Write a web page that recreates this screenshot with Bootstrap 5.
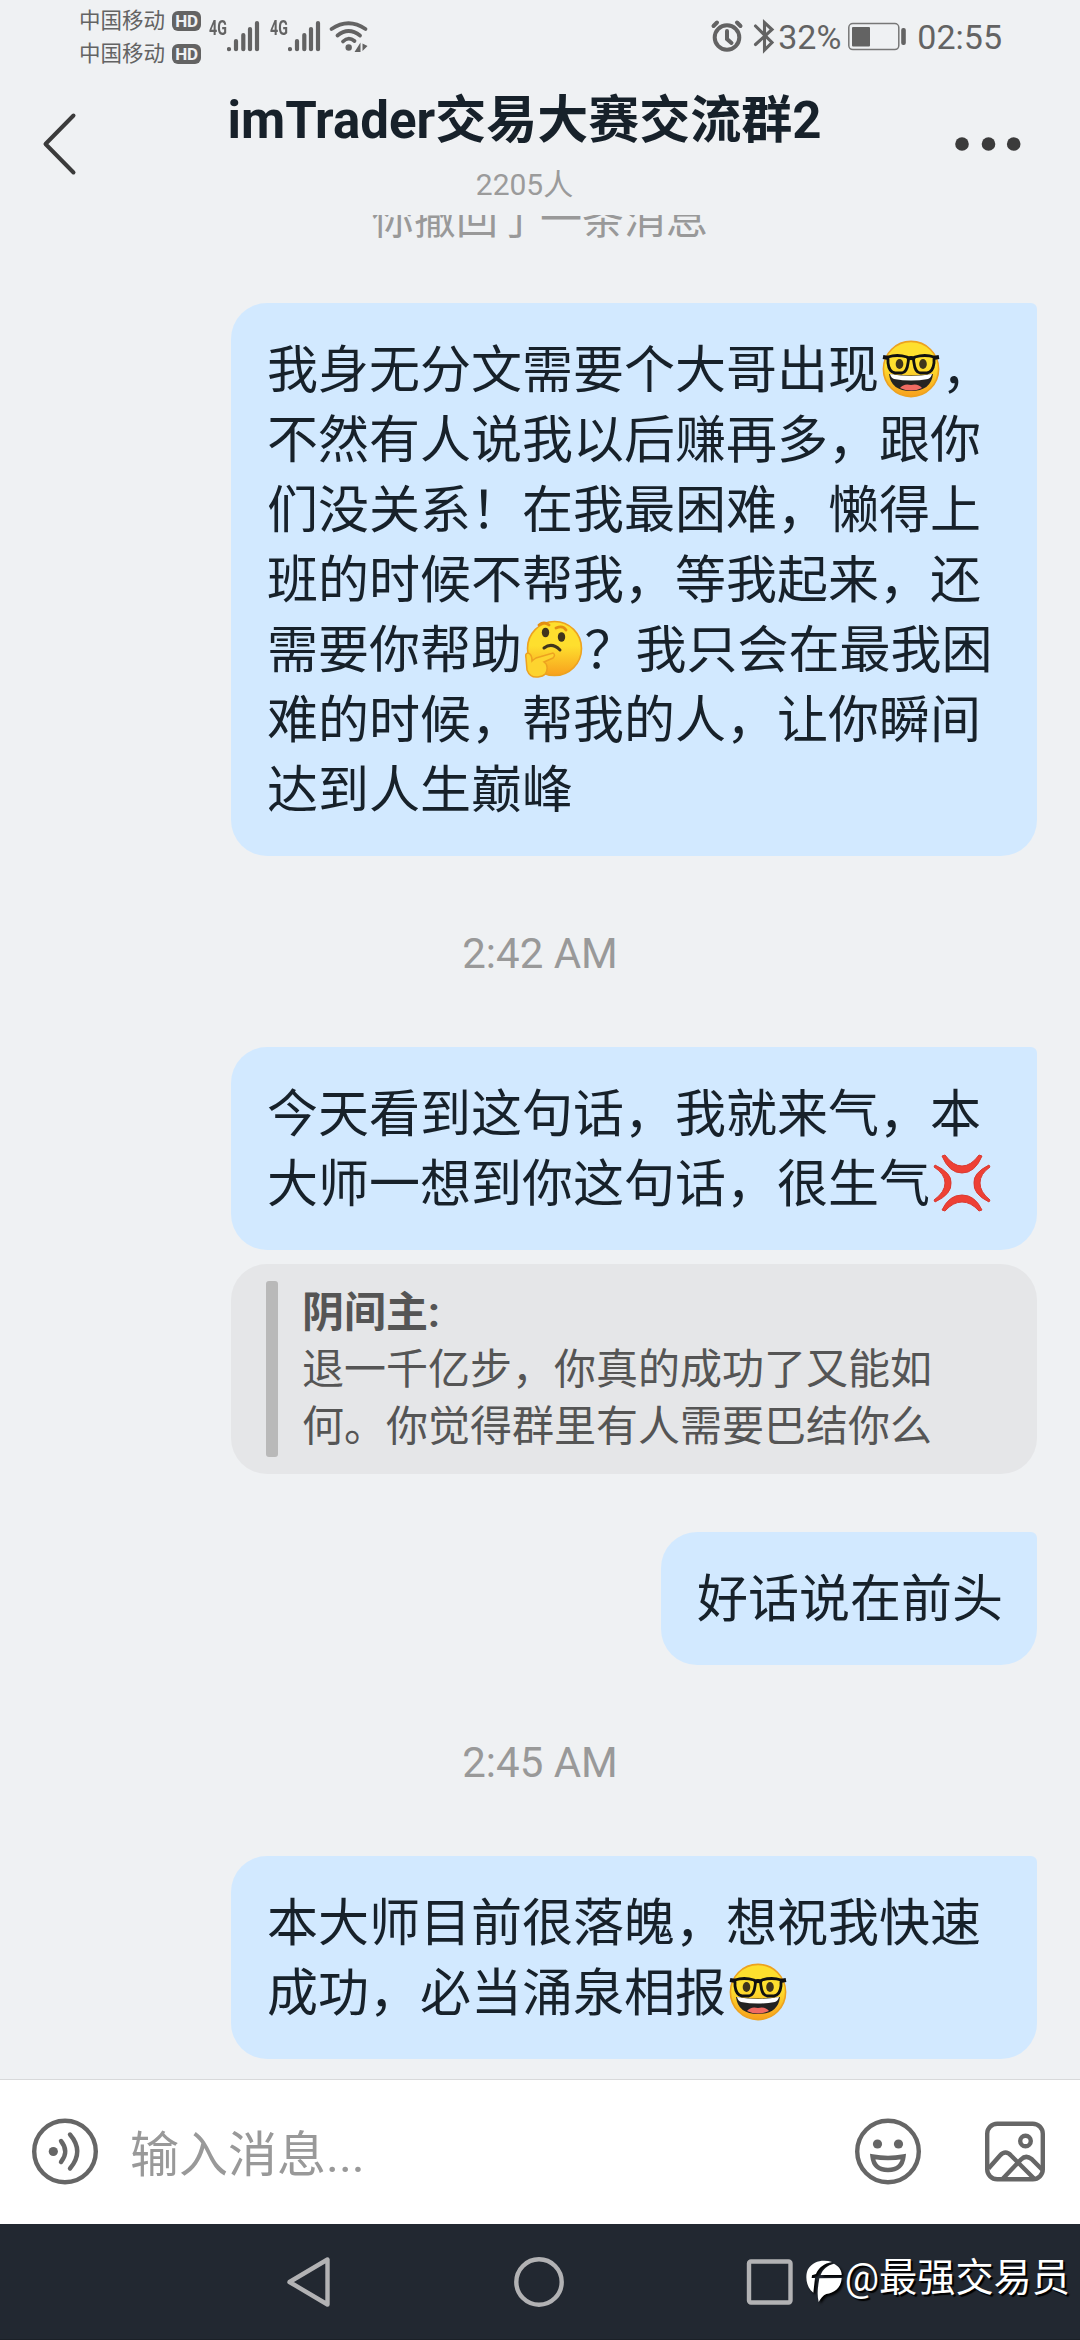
<!DOCTYPE html>
<html lang="zh-CN">
<head>
<meta charset="utf-8">
<meta name="viewport" content="width=device-width, initial-scale=1">
<title>imTrader交易大赛交流群2</title>
<link href="https://cdn.jsdelivr.net/npm/bootstrap@5.3.0/dist/css/bootstrap.min.css" rel="stylesheet">
<style>
  body { background: #eff1f3; font-family: Roboto, "Noto Sans CJK SC", sans-serif; color: #17212a; }
  svg { display: block; flex: none; }
  .screen { width: 1080px; height: 2340px; overflow: hidden; }

  .statusbar { height: 75px; padding: 4px 78px 0 79px; color: #636363; }
  .carriers { font-size: 21.5px; line-height: 33px; width: 130px; }
  .hd-tag { width: 29px; height: 20px; border-radius: 6px; background: #636363; color: #eff1f3; font-size: 17px; line-height: 20px; font-weight: 700; letter-spacing: -.3px; text-align: center; }
  .net-gen { font-size: 21px; line-height: 20px; font-weight: 700; width: 24px; margin-top: 14px; transform: scaleX(.68); transform-origin: left; }
  .net-gen-2 { margin-left: 6px; }
  .bars { margin-left: -6px; }
  .wifi { margin-left: 3px; }
  .status-num { font-size: 34px; line-height: 40px; margin-top: 13px; }

  .topbar { height: 140px; padding: 0 58px 0 42px; }
  .chat-title { font-size: 51px; line-height: 60px; font-weight: 700; white-space: nowrap; margin-top: 16px; }
  .chat-count { font-size: 30px; line-height: 36px; color: #9b9b9b; margin-top: 16px; }

  .recall { font-size: 42px; line-height: 57px; margin-top: -24px; margin-bottom: 55px; color: #999; }
  .stamp { height: 191px; padding-top: 3px; font-size: 42px; color: #999; }
  .thread { padding-right: 43px; }
  .bubble { background: #d2e9ff; border-radius: 36px 6px 36px 36px; padding: 33px 34px 30px 36px; font-size: 51px; line-height: 70px; white-space: nowrap; }
  .bubble-wide { width: 806px; }
  .emo { display: inline-block; width: 58px; height: 58px; margin: 0 2px 0 2.5px; vertical-align: -10px; }
  .quoted { width: 806px; height: 210px; margin: 14px 0 58px; padding: 17px 35px; border-radius: 36px; background: #e5e6e8; color: #555; font-size: 42px; line-height: 57px; gap: 24px; white-space: nowrap; }
  .quote-rule { width: 12px; border-radius: 3px; background: #b9b9b9; }
  .quote-text { padding-top: 3px; }
  .quote-name { font-weight: 700; }

  .composer { height: 145px; border-top: 1px solid #d8d9da; padding: 0 33px 0 30px; }
  .composer-hint { font-size: 49px; line-height: 70px; color: #999; margin-left: 30px; padding-top: 7px; }

  .sysnav { height: 116px; background: #222831; border-bottom: 1px solid #1b2027; padding: 0 286px; }
  .watermark { right: 10px; bottom: 32px; height: 60px; gap: 2px; font-size: 38.2px; line-height: 60px; color: #fff; text-shadow: 2px 2px 1px #000; white-space: nowrap; }
  .brand { filter: drop-shadow(2px 2px 1px #000); }
</style>
</head>
<body>
<svg width="0" height="0" class="position-absolute" aria-hidden="true">
  <defs>
    <linearGradient id="face" x1="0" y1="0" x2="0" y2="1"><stop offset=".45" stop-color="#fedf2e"/><stop offset="1" stop-color="#f8a01d"/></linearGradient>
    <symbol id="nerd" viewBox="0 0 58 58">
      <circle cx="29" cy="29" r="27.6" fill="url(#face)" stroke="#eda220" stroke-width="1.6"/>
      <path d="M7 34Q29 37 51 34Q49 51 29 51Q9 51 7 34Z" fill="#242322"/>
      <path d="M8 34Q29 38 50 34Q49 38 46 39Q29 42 12 39Q9 38 8 34Z" fill="#fff"/>
      <path d="M18 48Q22 43 29 45Q36 43 40 48Q29 53 18 48Z" fill="#f06b62"/>
      <ellipse cx="17.500" cy="24" rx="3.800" ry="5" fill="#40351c"/><ellipse cx="41" cy="24" rx="3.800" ry="5" fill="#40351c"/>
      <path d="M6 17Q15 14 25 17Q27 18 26 23Q25 32 20 33H13Q7 32 6 23ZM33 17Q43 14 52 17L52 23Q51 32 45 33H38Q33 32 32 23Q31 18 33 17Z" fill="none" stroke="#111" stroke-width="2.800"/>
      <path d="M1 17L7 18M51 18L57 17M25 19Q29 17 33 19" fill="none" stroke="#111" stroke-width="4.200"/>
    </symbol>
    <symbol id="bars" viewBox="234 4 37 60"><path d="M236 49v.2M243 41v8.200M250.300 35v14.200M257 29v20.200M264 23v26.200"/></symbol>
  </defs>
</svg>

<div class="screen d-flex flex-column position-relative">

  <div class="statusbar d-flex justify-content-between flex-shrink-0">
    <div class="d-flex">
      <div class="carriers">
        <div class="d-flex align-items-center justify-content-between pe-2"><span>中国移动</span><span class="hd-tag">HD</span></div>
        <div class="d-flex align-items-center justify-content-between pe-2"><span>中国移动</span><span class="hd-tag">HD</span></div>
      </div>
      <div class="net-gen">4G</div>
      <svg class="bars" width="37" height="60" stroke="#636363" stroke-width="4.200" stroke-linecap="round"><use href="#bars"/></svg>
      <div class="net-gen net-gen-2">4G</div>
      <svg class="bars" width="37" height="60" stroke="#636363" stroke-width="4.200" stroke-linecap="round"><use href="#bars"/></svg>
      <svg class="wifi" width="42" height="60" viewBox="328 4 42 60" fill="none" stroke="#636363" stroke-width="3.800" stroke-linecap="round">
        <path d="M331.500 29Q348.500 17.500 365.500 29M337.500 35.500Q348.500 26.500 360 35.500M343 41.500Q348.500 36 354.500 41"/>
        <circle cx="348.700" cy="47.500" r="3.200" fill="#636363" stroke="none"/>
        <path d="M360.500 42.500v9.500h-6zM362.500 43.500l5 2.500-5 5z" fill="#636363" stroke="none"/>
      </svg>
    </div>
    <div class="d-flex">
      <svg width="68" height="60" viewBox="711 4 68 60" fill="none" stroke="#636363" stroke-width="4" stroke-linecap="round">
        <circle cx="728" cy="37.500" r="12.300"/><path d="M728 31v8l4.500 4M714.500 26l3.500-3.500M738 22.500l3.500 3.500"/>
        <path d="M756.500 26l16.500 16.500-7.500 7.500V22.500l7.500 7-16.500 15" stroke-width="3.100"/>
      </svg>
      <div class="status-num">32%</div>
      <svg width="76" height="60" viewBox="845 4 76 60">
        <rect x="852.800" y="23.600" width="50" height="26" rx="4" fill="none" stroke="#777" stroke-width="1.500"/><rect x="856" y="27" width="18" height="19.500" rx="1" fill="#636363"/><rect x="905.200" y="28" width="4.600" height="17" rx="2" fill="#636363"/>
      </svg>
      <div class="status-num">02:55</div>
    </div>
  </div>

  <header class="topbar d-flex justify-content-between flex-shrink-0">
    <svg width="53" height="140" viewBox="42 75 53 140"><path d="M73.500 115.500L45.500 144l28 28.500" fill="none" stroke="#3b3b3b" stroke-width="4" stroke-linecap="round" stroke-linejoin="round"/></svg>
    <div class="text-center">
      <div class="chat-title">imTrader交易大赛交流群2</div>
      <div class="chat-count">2205人</div>
    </div>
    <svg width="68" height="140" viewBox="954 75 68 140" fill="#3b3b3b"><circle cx="962" cy="144" r="6.800"/><circle cx="988.500" cy="144" r="6.800"/><circle cx="1013.700" cy="144" r="6.800"/></svg>
  </header>

  <main class="flex-grow-1 overflow-hidden">
    <div class="recall text-center">你撤回了一条消息</div>
    <div class="thread d-flex flex-column align-items-end">
      <div class="bubble bubble-wide">我身无分文需要个大哥出现<svg class="emo"><use href="#nerd"/></svg>，<br>不然有人说我以后赚再多，跟你<br>们没关系！在我最困难，懒得上<br>班的时候不帮我，等我起来，还<br>需要你帮助<svg class="emo" viewBox="0 0 58 58">
          <circle cx="29.500" cy="28.500" r="27" fill="url(#face)" stroke="#eda220" stroke-width="1.600"/>
          <ellipse cx="20.500" cy="12.500" rx="3.700" ry="4.800" fill="#40351c"/><ellipse cx="36.500" cy="17" rx="3.700" ry="4.800" fill="#40351c"/>
          <path d="M14 5q5-4 10 0M31 8q7-3 10 2" fill="none" stroke="#e38f12" stroke-width="2.800" stroke-linecap="round"/>
          <path d="M19 28q8-6 16 2" fill="none" stroke="#40351c" stroke-width="3" stroke-linecap="round"/>
          <path d="M3 33Q0 33 1 38L2 50Q5 58 13 57Q23 56 22 47Q22 44 19 42L28 38Q31 35 28 33L11 38Q8 40 7 41Q7 34 3 33Z" fill="#fdd42f" stroke="#eda220" stroke-width="1.500"/>
        </svg>？我只会在最我困<br>难的时候，帮我的人，让你瞬间<br>达到人生巅峰</div>
    </div>
    <div class="stamp d-flex align-items-center justify-content-center">2:42 AM</div>
    <div class="thread d-flex flex-column align-items-end">
      <div class="bubble bubble-wide">今天看到这句话，我就来气，本<br>大师一想到你这句话，很生气<svg class="emo" viewBox="0 0 58 58" fill="#ee4035" stroke="#d93a31" stroke-width="1">
          <path d="M12 1Q20 12 29 12Q38 12 46 1L49 2Q42 19 29 19Q16 19 9 2Z"/>
          <path d="M12 57Q20 48 29 48Q38 48 46 57L49 56Q42 41 29 41Q16 41 9 56Z"/>
          <path d="M2 11Q19 19 18 29Q19 40 2 48L1 46Q12 38 12 29Q12 20 1 13Z"/>
          <path d="M56 11Q40 19 41 29Q40 40 56 48L57 46Q47 38 47 29Q47 20 57 13Z"/>
        </svg></div>
      <div class="quoted d-flex">
        <div class="quote-rule"></div>
        <div class="quote-text">
          <div class="quote-name">阴间主:</div>
          <div>退一千亿步，你真的成功了又能如<br>何。你觉得群里有人需要巴结你么</div>
        </div>
      </div>
      <div class="bubble">好话说在前头</div>
    </div>
    <div class="stamp d-flex align-items-center justify-content-center">2:45 AM</div>
    <div class="thread d-flex flex-column align-items-end">
      <div class="bubble bubble-wide">本大师目前很落魄，想祝我快速<br>成功，必当涌泉相报<svg class="emo"><use href="#nerd"/></svg></div>
    </div>
  </main>

  <div class="composer bg-white d-flex align-items-center flex-shrink-0">
    <svg width="70" height="70" viewBox="30 2116 70 70" fill="none" stroke="#666" stroke-width="4.400" stroke-linecap="round">
      <circle cx="65" cy="2150.500" r="30.800"/><circle cx="53.300" cy="2150.500" r="4.600" fill="#666" stroke="none"/>
      <path d="M61 2140Q69.500 2150.500 61 2161M70 2133.500Q84.500 2150.500 70 2167.500"/>
    </svg>
    <div class="composer-hint flex-grow-1">输入消息...</div>
    <svg width="194" height="70" viewBox="853 2116.500 194 70" fill="none" stroke="#666" stroke-width="4.400">
      <circle cx="888" cy="2151" r="30.800"/>
      <g fill="#666" stroke="none"><circle cx="877.500" cy="2143.500" r="4.600"/><circle cx="898.500" cy="2143.500" r="4.600"/></g>
      <path d="M872.500 2156Q888 2159 903.500 2156Q902 2169.500 888 2169.500Q874 2169.500 872.500 2156Z"/>
      <rect x="987.200" y="2123.200" width="55.600" height="55.600" rx="10"/>
      <circle cx="1025.500" cy="2140.500" r="5.300"/>
      <path d="M988.500 2168L1000 2155Q1005.500 2149 1011 2155L1034 2178M1003 2178L1021 2159Q1026 2154 1031.500 2158.500L1042 2169"/>
    </svg>
  </div>

  <nav class="sysnav d-flex align-items-center justify-content-between flex-shrink-0">
    <svg width="46" height="60" viewBox="286 2252 46 60"><path d="M327.500 2259.500v45L289.500 2282z" fill="none" stroke="#b2b2b4" stroke-width="4.400" stroke-linejoin="round"/></svg>
    <svg width="54" height="60" viewBox="513 2252 54 60"><circle cx="540" cy="2282" r="22.700" fill="none" stroke="#b2b2b4" stroke-width="4.400"/></svg>
    <svg width="48" height="60" viewBox="745 2252 48 60"><rect x="748" y="2261.500" width="41.500" height="41" rx="2" fill="none" stroke="#b2b2b4" stroke-width="4.400"/></svg>
  </nav>

  <div class="watermark position-absolute d-flex align-items-center">
    <svg class="brand mt-2" width="37" height="44" viewBox="44 62 111 132" fill="#fff">
      <path d="M66 160C45 145 40 110 50 90C65 65 95 60 122 68C98 72 82 85 74 104L62 108L61 116H71Z"/>
      <path d="M88 107C95 88 108 78 128 73C145 82 151 95 151 107Z"/>
      <path d="M84 117L151 116C150 145 130 160 105 164C95 168 88 178 82 188C76 165 80 140 84 117Z"/>
    </svg>
    <span>@最强交易员</span>
  </div>
</div>
<script src="https://cdn.jsdelivr.net/npm/bootstrap@5.3.0/dist/js/bootstrap.bundle.min.js"></script>
</body>
</html>
